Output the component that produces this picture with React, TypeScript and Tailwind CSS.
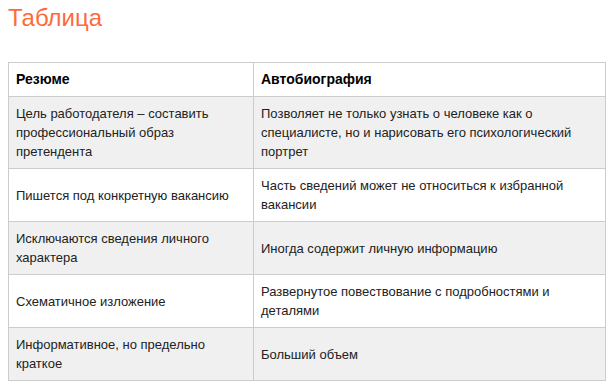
import React from 'react';

const rows: [string, string][] = [
    ['Цель работодателя – составить профессиональный образ претендента', 'Позволяет не только узнать о человеке как о специалисте, но и нарисовать его психологический портрет'],
    ['Пишется под конкретную вакансию', 'Часть сведений может не относиться к избранной вакансии'],
    ['Исключаются сведения личного характера', 'Иногда содержит личную информацию'],
    ['Схематичное изложение', 'Развернутое повествование с подробностями и деталями'],
    ['Информативное, но предельно краткое', 'Больший объем'],
];

const App: React.FC = () => {
    return (
        <div className="min-h-screen bg-white px-2 pt-1 font-['Liberation_Sans',Arial,sans-serif]">
            <h1 className="text-[24px] leading-[28px] text-[#ff6a3d]">Таблица</h1>

            <table className="mt-[30px] w-[598px] table-fixed border-collapse border border-[#cccccc]">
                <colgroup>
                    <col className="w-[245px]" />
                    <col />
                </colgroup>
                <thead>
                    <tr className="bg-white">
                        <th className="border border-[#cccccc] px-[7px] py-[7px] text-left text-[14px] leading-[19px] font-bold text-black">Резюме</th>
                        <th className="border border-[#cccccc] px-[7px] py-[7px] text-left text-[14px] leading-[19px] font-bold text-black">Автобиография</th>
                    </tr>
                </thead>
                <tbody>
                    {rows.map(([left, right], i) => (
                        <tr key={i} className={i % 2 === 0 ? 'bg-[#f0f0f0]' : 'bg-white'}>
                            <td className="border border-[#cccccc] px-[7px] py-[7px] align-middle text-[13px] leading-[19px] text-[#222222]">{left}</td>
                            <td className="border border-[#cccccc] px-[7px] py-[7px] align-middle text-[13px] leading-[19px] text-[#222222]">{right}</td>
                        </tr>
                    ))}
                </tbody>
            </table>
        </div>
    );
};

export default App;
